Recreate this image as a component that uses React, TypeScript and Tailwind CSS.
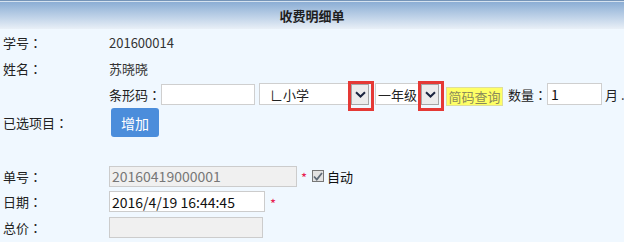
import { useState } from 'react';

function Arrow() {
  return (
    <div className="relative flex h-[21px] w-[18px] items-center justify-center border border-[#a6a6a6] bg-[#ececec]">
      <svg width="11" height="7" viewBox="0 0 11 7">
        <path d="M1 1.2 L5.5 5.5 L10 1.2" fill="none" stroke="#1b2540" strokeWidth="2" />
      </svg>
      <div className="absolute -left-[4px] -top-[4px] h-[30px] w-[26px] border-[3px] border-[#e53935]" />
    </div>
  );
}

// 全角冒号居中显示
function Colon() {
  return <span className="font-['Noto_Sans_CJK_TC',sans-serif]">：</span>;
}

function Row({ label, h, children }: { label?: string; h: string; children?: React.ReactNode }) {
  return (
    <div className={`flex items-center ${h}`}>
      <div className="w-[109px] shrink-0 pl-[3px] text-[#222]">
        {label && (
          <>
            {label}
            <Colon />
          </>
        )}
      </div>
      <div className="flex items-center">{children}</div>
    </div>
  );
}

function App() {
  const [auto] = useState(true);

  return (
    <div className="h-[242px] w-[624px] overflow-hidden bg-[#f0f8ff] font-['Noto_Sans_CJK_SC','Microsoft_YaHei',sans-serif] text-[13px] leading-none [text-spacing-trim:space-all]">
      <div className="flex h-[29px] items-center justify-center border-t border-[#7594b8] bg-gradient-to-b from-[#88abd3] to-[#e9f0f7] shadow-[inset_0_1px_0_#d5e2ef]">
        <span className="font-bold text-[#1e1e1e]">收费明细单</span>
      </div>

      <Row label="学号" h="h-[26px]">
        <span className="text-[#333]">201600014</span>
      </Row>
      <Row label="姓名" h="h-[27px]">
        <span className="text-[#333]">苏晓晓</span>
      </Row>
      <Row h="h-[24px]">
        <span className="w-[52px] whitespace-nowrap text-[#222]">
          条形码
          <Colon />
        </span>
        <input className="h-[21px] w-[94px] border border-[#cfcfcf] bg-white outline-none" />
        <div className="ml-[4px] flex h-[22px] w-[92px] items-center border border-r-0 border-[#cfcfcf] bg-white pl-[10px] text-[#222]">
          ∟小学
        </div>
        <Arrow />
        <div className="ml-[6px] flex h-[22px] w-[46px] items-center border border-r-0 border-[#cfcfcf] bg-white pl-[2px] text-[#222]">
          一年级
        </div>
        <Arrow />
        <div className="ml-[7px] mt-[5px] flex h-[19px] w-[57px] items-center justify-center border border-[#dede9c] bg-[#ffff66] text-[#8a8a5a]">
          简码查询
        </div>
        <span className="ml-[5px] w-[39px] whitespace-nowrap text-[#222]">
          数量
          <Colon />
        </span>
        <input
          defaultValue="1"
          className="h-[22px] w-[55px] border border-[#cfcfcf] bg-white px-[3px] text-[14px] text-[#111] outline-none"
        />
        <span className="ml-[3px] whitespace-nowrap text-[#222]">月 .</span>
      </Row>
      <Row label="已选项目" h="h-[33px]">
        <button className="ml-[2px] h-[29px] w-[48px] rounded-[3px] bg-[#4b8ddb] text-[14px] text-white">增加</button>
      </Row>
      <div className="h-[24px]" />
      <Row label="单号" h="h-[26px]">
        <input
          disabled
          defaultValue="20160419000001"
          className="h-[21px] w-[188px] border border-[#cccccc] bg-[#f0f0f0] px-[2px] text-[14px] text-[#777]"
        />
        <span className="ml-[4px] mt-[3px] text-[#e8174f]">*</span>
        <div className="ml-[5px] flex h-[12px] w-[12px] items-center justify-center border border-[#777] bg-[#e3e3e3]">
          {auto && (
            <svg width="10" height="9" viewBox="0 0 10 9">
              <path d="M1 4.5 L3.8 7.5 L9 1" fill="none" stroke="#5f6b78" strokeWidth="1.8" />
            </svg>
          )}
        </div>
        <span className="ml-[3px] text-[#111]">自动</span>
      </Row>
      <Row label="日期" h="h-[25px]">
        <input
          defaultValue="2016/4/19 16:44:45"
          className="h-[21px] w-[156px] border border-[#cccccc] bg-white px-[2px] text-[14px] text-[#111] outline-none"
        />
        <span className="ml-[5px] mt-[3px] text-[#e8174f]">*</span>
      </Row>
      <Row label="总价" h="h-[27px]">
        <input disabled className="h-[21px] w-[154px] border border-[#cccccc] bg-[#f0f0f0]" />
      </Row>
    </div>
  );
}

export default App;
